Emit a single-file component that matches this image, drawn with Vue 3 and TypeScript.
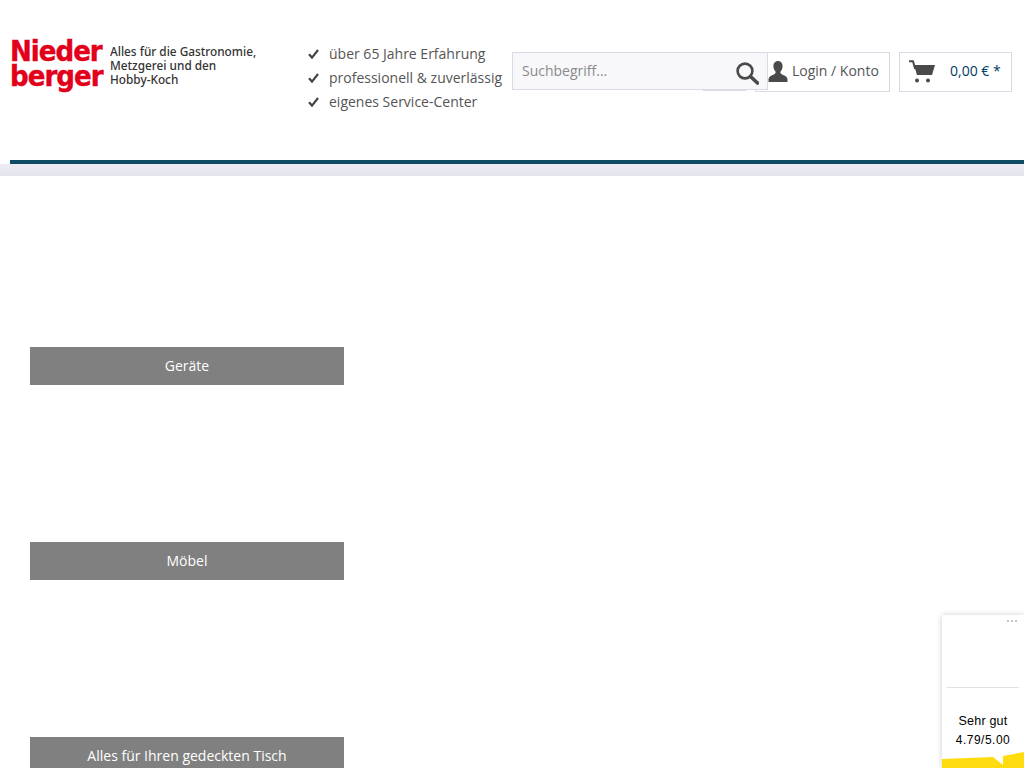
<script setup lang="ts">
const usps: string[] = ['über 65 Jahre Erfahrung', 'professionell & zuverlässig', 'eigenes Service-Center']
const tiles: string[] = ['Geräte', 'Möbel', 'Alles für Ihren gedeckten Tisch']
</script>

<template>
  <div class="page">
    <header class="header">
      <div class="top">
        <a class="logo">
          <div class="wordmark"><span>Nieder</span><span>berger</span></div>
          <div class="claim">Alles für die Gastronomie,<br />Metzgerei und den<br />Hobby-Koch</div>
        </a>
        <ul class="usps">
          <li v-for="u in usps" :key="u">
            <svg width="11" height="10" viewBox="0 0 11 10"><path d="M1 5.2 4 8.6 10 1" fill="none" stroke="#444" stroke-width="2.200" /></svg>
            <span>{{ u }}</span>
          </li>
        </ul>
        <div class="actions">
          <div class="peek"></div>
          <div class="search">
            <span class="ph">Suchbegriff...</span>
            <svg width="24" height="24" viewBox="0 0 24 24"><circle cx="10" cy="10" r="7.4" fill="none" stroke="#4a4a4a" stroke-width="2.6" /><path d="M15.5 15.5 22.5 22" stroke="#4a4a4a" stroke-width="3.6" stroke-linecap="round" /></svg>
          </div>
          <div class="btn login">
            <svg width="20" height="22" viewBox="0 0 20 22"><path d="M10 0c3 0 4.600 2.300 4.600 5.200 0 2.200-.9 4.200-2.100 5.400-.5 1.500.2 2.400 2.100 3.200 2.500 1 4.400 1.800 4.900 4.200V21H.5v-3c.5-2.400 2.400-3.200 4.900-4.200 1.900-.8 2.600-1.700 2.100-3.200C6.300 9.400 5.400 7.400 5.400 5.200 5.400 2.300 7 0 10 0Z" fill="#4a4a4a" /></svg>
            <span>Login / Konto</span>
          </div>
          <div class="btn cart">
            <svg width="26" height="24" viewBox="0 0 26 24"><path d="M0 1.200H4L6.200 9" fill="none" stroke="#4a4a4a" stroke-width="2" /><path d="M5 5H26L23 15H8Z" fill="#4a4a4a" /><circle cx="8" cy="20.500" r="2" fill="#4a4a4a" /><circle cx="19" cy="20.500" r="2" fill="#4a4a4a" /></svg>
            <span class="price">0,00 € *</span>
          </div>
        </div>
      </div>
      <div class="rule"></div>
      <div class="band"></div>
    </header>

    <main class="tiles">
      <div v-for="t in tiles" :key="t" class="tile">
        <div class="label">{{ t }}</div>
      </div>
    </main>

    <aside class="badge">
      <div class="dots"><i></i><i></i><i></i></div>
      <div class="seal"></div>
      <div class="rating">
        <div class="verdict">Sehr gut</div>
        <div class="score">4.79/5.00</div>
      </div>
      <svg class="ribbon" width="82" height="16" viewBox="0 0 82 16"><path d="M0 7 51 5 61 13V4L82 0V16H0Z" fill="#ffdc0f" /></svg>
    </aside>
  </div>
</template>

<style>
html, body { margin: 0; height: 100%; overflow: hidden; background: #fff; }
</style>

<style scoped>
.page {
  position: relative;
  height: 768px;
  overflow: hidden;
  font-family: "Open Sans", "Liberation Sans", sans-serif;
  color: #555;
}
.top {
  display: flex;
  align-items: flex-start;
  height: 160px;
  padding-left: 10px;
  box-sizing: border-box;
}
.logo {
  display: flex;
  width: 298px;
  flex: none;
  padding-top: 39px;
  gap: 8px;
  box-sizing: border-box;
}
.wordmark {
  display: flex;
  flex-direction: column;
  width: 92px;
  font-family: "DejaVu Sans Condensed", "DejaVu Sans", sans-serif;
  font-weight: 700;
  font-size: 29px;
  line-height: 25px;
  letter-spacing: -1px;
  -webkit-text-stroke: 0.4px #e2001a;
  color: #e2001a;
  white-space: nowrap;
}
.claim {
  font-family: "Noto Sans", sans-serif;
  font-size: 11.8px;
  font-weight: 500;
  line-height: 14px;
  color: #333;
  padding-top: 5px;
  white-space: nowrap;
}
.usps {
  list-style: none;
  margin: 0;
  padding: 42px 0 0;
  width: 204px;
  flex: none;
  font-size: 14px;
  line-height: 24px;
  white-space: nowrap;
}
.usps li { display: flex; align-items: center; gap: 10px; height: 24px; }
.actions {
  position: relative;
  display: flex;
  align-items: flex-start;
  padding-top: 52px;
}
.search {
  position: relative;
  z-index: 2;
  width: 256px;
  height: 38px;
  box-sizing: border-box;
  margin-right: -13px;
  background: #f8f8fb;
  border: 1px solid #dadae5;
  display: flex;
  align-items: center;
  justify-content: space-between;
  padding: 0 8px 0 9px;
}
.search svg { margin-top: 3px; }
.ph { font-size: 14px; line-height: 16px; color: #8a8a8a; }
.peek {
  position: absolute;
  left: 191px;
  top: 80px;
  width: 43px;
  height: 11px;
  box-sizing: border-box;
  border: 1px solid #dadae5;
}
.btn {
  height: 40px;
  box-sizing: border-box;
  border: 1px solid #dadae5;
  background: #fff;
  display: flex;
  align-items: center;
  font-size: 14px;
}
.btn span { line-height: 16px; margin-top: -2px; }
.login {
  width: 135px;
  gap: 4px;
  padding-left: 12px;
  margin-right: 9px;
}
.cart {
  width: 113px;
  padding-left: 9px;
  gap: 15px;
}
.price { color: #003d64; }
.rule { height: 4px; margin-left: 10px; background: #0f4c63; }
.band { height: 12px; background: linear-gradient(#ececf2, #e4e4ec); }
.tiles {
  display: flex;
  flex-direction: column;
  padding: 14px 30px 0;
}
.tile {
  flex: none;
  width: 314px;
  height: 195px;
  display: flex;
  flex-direction: column;
  justify-content: flex-end;
}
.label {
  height: 38px;
  line-height: 38px;
  background: #808080;
  color: #fff;
  text-align: center;
  font-size: 14px;
  white-space: nowrap;
}
.badge {
  position: absolute;
  right: 0;
  bottom: 0;
  width: 82px;
  height: 153px;
  background: #fff;
  box-shadow: 0 0 6px rgba(0, 0, 0, 0.2);
  display: flex;
  flex-direction: column;
  font-family: "Liberation Sans", Arial, sans-serif;
  color: #000;
  overflow: hidden;
}
.dots {
  display: flex;
  justify-content: flex-end;
  gap: 2px;
  padding: 5px 7px 0 0;
}
.dots i { width: 2px; height: 2px; background: #c4c4c4; }
.seal {
  height: 65px;
  margin: 0 5px;
  border-bottom: 1px solid #e2e2e2;
}
.rating {
  text-align: center;
  font-size: 12px;
  line-height: 19px;
  padding-top: 24px;
}
.verdict { font-size: 12.5px; letter-spacing: 0.2px; }
.score { letter-spacing: 0.5px; }
.ribbon { position: absolute; left: 0; bottom: 0; display: block; }
</style>
